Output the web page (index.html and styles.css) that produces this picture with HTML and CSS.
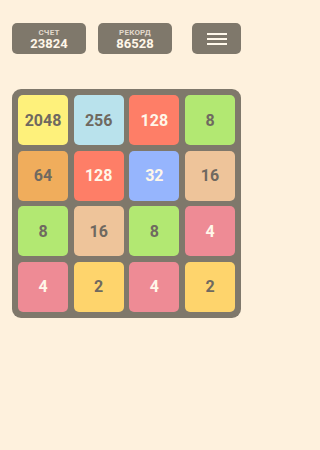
FILE: index.html
```html
<!DOCTYPE html>
<html lang="ru">
<head>
<meta charset="utf-8">
<title>2048</title>
<link rel="stylesheet" href="styles.css">
</head>
<body>
<div class="app">
  <header class="top">
    <div class="score">
      <span class="label">СЧЕТ</span>
      <span class="value">23824</span>
    </div>
    <div class="score">
      <span class="label">РЕКОРД</span>
      <span class="value">86528</span>
    </div>
    <div class="menu">
      <svg width="20" height="12" viewBox="0 0 20 12"><rect x="0" y="0" width="20" height="2" fill="#fff8ea"/><rect x="0" y="5" width="20" height="2" fill="#fff8ea"/><rect x="0" y="10" width="20" height="2" fill="#fff8ea"/></svg>
    </div>
  </header>
  <div class="board">
    <div class="tile t2048">2048</div>
    <div class="tile t256">256</div>
    <div class="tile t128 light">128</div>
    <div class="tile t8">8</div>
    <div class="tile t64">64</div>
    <div class="tile t128 light">128</div>
    <div class="tile t32 light">32</div>
    <div class="tile t16">16</div>
    <div class="tile t8">8</div>
    <div class="tile t16">16</div>
    <div class="tile t8">8</div>
    <div class="tile t4 light">4</div>
    <div class="tile t4 light">4</div>
    <div class="tile t2">2</div>
    <div class="tile t4 light">4</div>
    <div class="tile t2">2</div>
  </div>
</div>
</body>
</html>
```

FILE: styles.css
```css
html, body {
  margin: 0;
  padding: 0;
  background: #fef1dd;
  font-family: Roboto, "Liberation Sans", sans-serif;
}
.app {
  width: 253px;
  height: 450px;
  padding: 23px 12px 0 12px;
  box-sizing: border-box;
}
.top {
  display: flex;
  height: 31px;
}
.score {
  width: 74px;
  height: 31px;
  background: #7f786b;
  border-radius: 5px;
  display: flex;
  flex-direction: column;
  align-items: center;
  justify-content: center;
  margin-right: 12px;
}
.score + .score {
  margin-right: 20px;
}
.label {
  font-size: 8px;
  font-weight: 700;
  letter-spacing: 0.2px;
  color: #e2d9cb;
  line-height: 9px;
  margin-top: 1px;
}
.value {
  font-size: 13px;
  font-weight: 700;
  color: #fff6e8;
  line-height: 14px;
}
.menu {
  width: 49px;
  height: 31px;
  background: #7f786b;
  border-radius: 5px;
  display: flex;
  align-items: center;
  justify-content: center;
}
.menu svg {
  display: block;
}
.board {
  margin-top: 35px;
  width: 229px;
  height: 229px;
  box-sizing: border-box;
  padding: 6px;
  background: #7f786b;
  border-radius: 9px;
  display: grid;
  grid-template-columns: repeat(4, 1fr);
  grid-template-rows: repeat(4, 1fr);
  gap: 5.67px;
}
.tile {
  border-radius: 5px;
  display: flex;
  align-items: center;
  justify-content: center;
  font-size: 16px;
  font-weight: 700;
  color: #6f6960;
}
.tile.light {
  color: #fff7e9;
}
.t2048 { background: #fef17b; }
.t256 { background: #b9e2ec; }
.t128 { background: #fe7e67; }
.t64 { background: #f0ad5c; }
.t32 { background: #96b5fd; }
.t16 { background: #eec49a; }
.t8 { background: #b2e872; }
.t4 { background: #ee8b95; }
.t2 { background: #fed46c; }
```
